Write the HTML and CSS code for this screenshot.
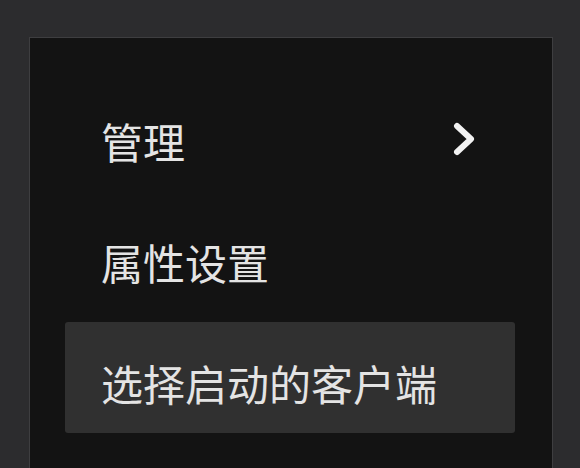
FILE: index.html
```html
<!DOCTYPE html>
<html lang="zh-CN">
<head>
<meta charset="utf-8">
<title>菜单</title>
<link rel="stylesheet" href="styles.css">
</head>
<body>
<div class="panel">
  <div class="item">
    <span class="label">管理</span>
    <svg class="chevron" width="22" height="34" viewBox="0 0 22 34" aria-hidden="true">
      <polyline points="4,4 18,17 4,30" fill="none" stroke="#f2f2f2" stroke-width="6" stroke-linecap="round" stroke-linejoin="round"/>
    </svg>
  </div>
  <div class="item">
    <span class="label">属性设置</span>
  </div>
  <div class="item active">
    <span class="label">选择启动的客户端</span>
  </div>
</div>
</body>
</html>
```

FILE: styles.css
```css
html, body {
  margin: 0;
  padding: 0;
  height: 100%;
  overflow: hidden;
}
body {
  background: #2c2c2e;
  font-family: "Noto Sans CJK SC", "Noto Sans", sans-serif;
}
.panel {
  margin: 37px 0 0 29px;
  width: 524px;
  height: calc(100% - 37px);
  background: #131313;
  border: 1px solid #3e3e40;
  border-bottom: none;
  padding: 42px 37px 0 35px;
  box-sizing: border-box;
  display: flex;
  flex-direction: column;
  gap: 10px;
}
.item {
  height: 111px;
  flex: none;
  box-sizing: border-box;
  padding: 10px 40px 0 36px;
  display: flex;
  align-items: center;
  justify-content: space-between;
  border-radius: 3px;
}
.item.active {
  background: #303030;
}
.label {
  font-size: 42px;
  line-height: 1;
  color: #e4e4e4;
}
.chevron {
  display: block;
  margin-top: -4px;
}
```
